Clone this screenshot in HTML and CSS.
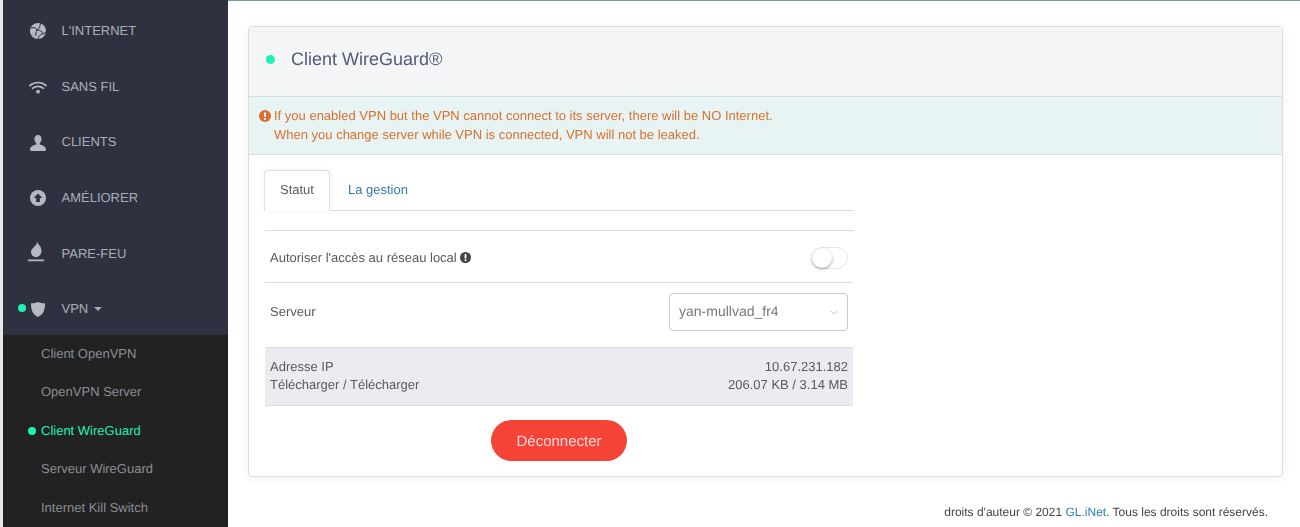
FILE: index.html
```html
<!DOCTYPE html>
<html lang="fr">
<head>
<meta charset="utf-8">
<title>Client WireGuard</title>
<link rel="stylesheet" href="styles.css">
</head>
<body>
<aside class="sidebar">
  <nav class="menu">
    <a class="item"><span class="ico"><svg viewBox="0 0 16 16" width="16" height="16"><circle cx="8" cy="8" r="8" fill="#b4b8c1"/><path d="M1 5C4 4 6 5 7 7M7 7c2-1 3-3 3.500-7M7 7c-1 2-1.500 4-1 6M7 7c3 0 5 1 6 4M13 11c-2 0-4 1-5 5M13 11l3-2" fill="none" stroke="#2e3140" stroke-width="1"/></svg></span><span>L'INTERNET</span></a>
    <a class="item"><span class="ico"><svg viewBox="0 0 18 13" width="18" height="13"><path d="M1 4.500C5.500.5 12.500.5 17 4.500M3.500 7.300C6.500 4.700 11.500 4.700 14.500 7.300" fill="none" stroke="#b4b8c1" stroke-width="1.700" stroke-linecap="round"/><circle cx="9" cy="10.700" r="1.900" fill="#b4b8c1"/></svg></span><span>SANS FIL</span></a>
    <a class="item"><span class="ico"><svg viewBox="0 0 16 16" width="16" height="16"><path d="M8 0c2.300 0 3.600 1.700 3.600 4 0 1.800-.8 3.300-1.800 4.100v1.400c2.600.7 5.500 1.500 6.200 4.500.2 1-.3 2-1.500 2H1.500C.3 16-.2 15 0 14c.7-3 3.600-3.800 6.200-4.500V8.100C5.200 7.300 4.400 5.800 4.400 4 4.400 1.700 5.700 0 8 0z" fill="#b4b8c1"/></svg></span><span>CLIENTS</span></a>
    <a class="item"><span class="ico"><svg viewBox="0 0 16 16" width="16" height="16"><circle cx="8" cy="8" r="8" fill="#b4b8c1"/><path d="M8 3.600 12.300 8H9.900v4H6.100V8H3.700z" fill="#2e3140"/></svg></span><span>AMÉLIORER</span></a>
    <a class="item"><span class="ico"><svg viewBox="0 0 20 25" width="20" height="25"><path d="M9 0c.3 3 4.500 5 4.500 9.500 0 4-2.500 6.500-5.500 6.500-2.500 0-5-2-5-5 0-2.500 1.500-3.500 3-5C7.500 4.500 9.500 3 9 0z" fill="#b4b8c1"/><rect y="18.500" width="16" height="1.700" fill="#b4b8c1"/></svg></span><span>PARE-FEU</span></a>
    <a class="item item-vpn"><i class="dot dot-vpn"></i><span class="ico"><svg viewBox="0 0 14 15" width="14" height="15"><path d="M7 0c2 .9 4.400 1.300 7 1.300 0 5.800-1 11-7 13.700C1 12.300 0 7.100 0 1.300 2.600 1.300 5 .9 7 0z" fill="#b4b8c1"/></svg></span><span>VPN</span><i class="caret"></i></a>
  </nav>
  <nav class="submenu">
    <a class="subitem">Client OpenVPN</a>
    <a class="subitem">OpenVPN Server</a>
    <a class="subitem active"><i class="dot dot-sub"></i>Client WireGuard</a>
    <a class="subitem">Serveur WireGuard</a>
    <a class="subitem">Internet Kill Switch</a>
  </nav>
</aside>
<main class="main">
  <section class="card">
    <header class="card-head"><i class="dot dot-head"></i><h1>Client WireGuard®</h1></header>
    <div class="alert">
      <svg class="alert-ico" viewBox="0 0 12 12" width="12" height="12"><circle cx="6" cy="6" r="6" fill="#d9702f"/><rect x="5" y="2.300" width="2" height="4.800" rx=".6" fill="#e8f4f3"/><rect x="5" y="8" width="2" height="1.900" rx=".6" fill="#e8f4f3"/></svg>
      <p>If you enabled VPN but the VPN cannot connect to its server, there will be NO Internet.<br>When you change server while VPN is connected, VPN will not be leaked.</p>
    </div>
    <div class="card-body">
      <div class="tabs">
        <a class="tab current">Statut</a>
        <a class="tab">La gestion</a>
      </div>
      <div class="rows">
        <div class="row row-toggle">
          <span class="label label-toggle">Autoriser l'accès au réseau local <svg class="hint" viewBox="0 0 12 12" width="11" height="11"><circle cx="6" cy="6" r="6" fill="#444"/><rect x="5" y="2.300" width="2" height="4.800" rx=".6" fill="#fff"/><rect x="5" y="8" width="2" height="1.900" rx=".6" fill="#fff"/></svg></span>
          <span class="toggle"><i class="knob"></i></span>
        </div>
        <div class="row row-server">
          <span class="label label-server">Serveur</span>
          <div class="select">yan-mullvad_fr4<svg viewBox="0 0 8 5" width="8" height="5"><path d="M.5.700 4 4 7.500.700" fill="none" stroke="#c4c4c4" stroke-width="1"/></svg></div>
        </div>
        <div class="stats">
          <div class="stat"><span>Adresse IP</span><span>10.67.231.182</span></div>
          <div class="stat"><span>Télécharger / Télécharger</span><span>206.07 KB / 3.14 MB</span></div>
        </div>
        <div class="actions"><button class="btn" type="button">Déconnecter</button></div>
      </div>
    </div>
  </section>
  <footer class="footer">droits d'auteur © 2021 <a>GL.iNet</a>. Tous les droits sont réservés.</footer>
</main>
</body>
</html>
```
FILE: styles.css
```css
* { box-sizing: border-box; }
html, body { height: 100%; }
body {
  margin: 0;
  height: 527px;
  overflow: hidden;
  display: flex;
  background: #fff;
  color: #5a5a5a;
  font: 13px/1.42857 "Liberation Sans", Arial, sans-serif;
  text-rendering: geometricPrecision;
}
.sidebar {
  flex: 0 0 228px;
  height: 527px;
  border-left: 3px solid #e7e8ea;
  background: #222;
  overflow: hidden;
  will-change: opacity;
}
.menu { background: #2e3140; padding-top: 3.700px; height: 335px; }
.item {
  position: relative;
  display: flex;
  align-items: center;
  height: 55.600px;
  color: #a9adb8;
  font-size: 13px;
}
.ico {
  flex: 0 0 58.500px;
  display: flex;
  justify-content: center;
  padding-left: 12px;
}
.dot { display: block; border-radius: 50%; background: #1ff2b5; }
.dot-vpn { position: absolute; left: 15px; top: 22px; width: 8px; height: 8px; }
.caret {
  margin-left: 6px;
  width: 0;
  height: 0;
  border: 4px solid transparent;
  border-top-color: #a9adb8;
  border-bottom: 0;
}
.submenu { background: #222; }
.subitem {
  position: relative;
  display: flex;
  align-items: center;
  height: 38.500px;
  padding-left: 38px;
  color: #8b8e94;
}
.subitem.active { color: #1ff2b5; }
.dot-sub { position: absolute; left: 25px; top: 15px; width: 8px; height: 8px; }
.main {
  flex: 1;
  min-width: 0;
  border-top: 1px solid #7b93ab;
  padding: 25px 17px 0 20px;
  will-change: opacity;
}
.card {
  height: 451px;
  border: 1px solid #dcdcdc;
  border-radius: 4px;
  box-shadow: 0 2px 12px rgba(0, 0, 0, .05);
  background: #fff;
  overflow: hidden;
}
.card-head {
  display: flex;
  align-items: center;
  height: 69px;
  padding: 0 0 4px 17px;
  background: #f3f5f7;
}
.dot-head { width: 9px; height: 9px; margin-right: 16px; }
h1 { margin: 0; color: #555a75; font-size: 18px; font-weight: 400; }
.alert {
  display: flex;
  height: 59px;
  padding: 9px 10px;
  background: #e8f4f3;
  border-top: 1px solid #cfe0df;
  border-bottom: 1px solid #d5e0e0;
  color: #d9702f;
}
.alert-ico { flex: none; margin: 4px 3px 0 0; }
.alert p { margin: 0; line-height: 19px; }
.card-body { padding: 15px 0 0 15px; width: 605px; }
.tabs { display: flex; height: 41px; border-bottom: 1px solid #ddd; }
.tab {
  padding: 10px 15px 0;
  height: 41px;
  color: #337ab7;
  border: 1px solid transparent;
  border-bottom: 0;
}
.tab + .tab { margin-left: 2px; }
.tab.current {
  color: #5a5a5a;
  background: #fff;
  border-color: #e0e0e0;
  border-radius: 4px 4px 0 0;
  box-shadow: 0 0 6px rgba(0, 0, 0, .06);
  margin-bottom: -1px;
  height: 41px;
}
.rows { margin: 19px 0 0 1px; padding-right: 1px; border-top: 1px solid #ddd; }
.row {
  display: flex;
  justify-content: space-between;
  align-items: center;
  padding: 0 5px;
  border-bottom: 1px solid #ddd;
}
.row-toggle { height: 52px; padding-top: 2px; }
.label-toggle { margin-top: 2px; }
.row-server { height: 65px; align-items: flex-start; padding-top: 10px; }
.label-server { margin-top: 10px; }
.hint { vertical-align: -1px; }
.toggle {
  display: block;
  width: 36px;
  height: 22px;
  border: 1px solid #e6e6e6;
  border-radius: 11px;
  position: relative;
}
.knob {
  position: absolute;
  left: -1px;
  top: 0;
  width: 20px;
  height: 20px;
  border-radius: 50%;
  background: #fff;
  box-shadow: 0 1px 3px rgba(0, 0, 0, .4);
}
.select {
  display: flex;
  justify-content: space-between;
  align-items: center;
  width: 179px;
  height: 38px;
  padding: 0 9px 0 9px;
  border: 1px solid #ccc;
  border-radius: 4px;
  color: #777;
  font-size: 14px;
}
.stats {
  height: 58px;
  padding: 10px 5px 0;
  background: #ebecf1;
  border-bottom: 1px solid #ddd;
  line-height: 18px;
}
.stat { display: flex; justify-content: space-between; }
.actions { display: flex; justify-content: center; padding-top: 14px; }
.btn {
  width: 136px;
  height: 41px;
  border: 0;
  padding: 2px 0 0;
  border-radius: 21px;
  background: #f64338;
  color: #ffd9d6;
  font: 15px "Liberation Sans", Arial, sans-serif;
  text-rendering: geometricPrecision;
}
.footer {
  margin-top: 27px;
  text-align: right;
  padding-right: 15px;
  font-size: 12px;
  color: #444;
}
.footer a { color: #337ab7; }
```
